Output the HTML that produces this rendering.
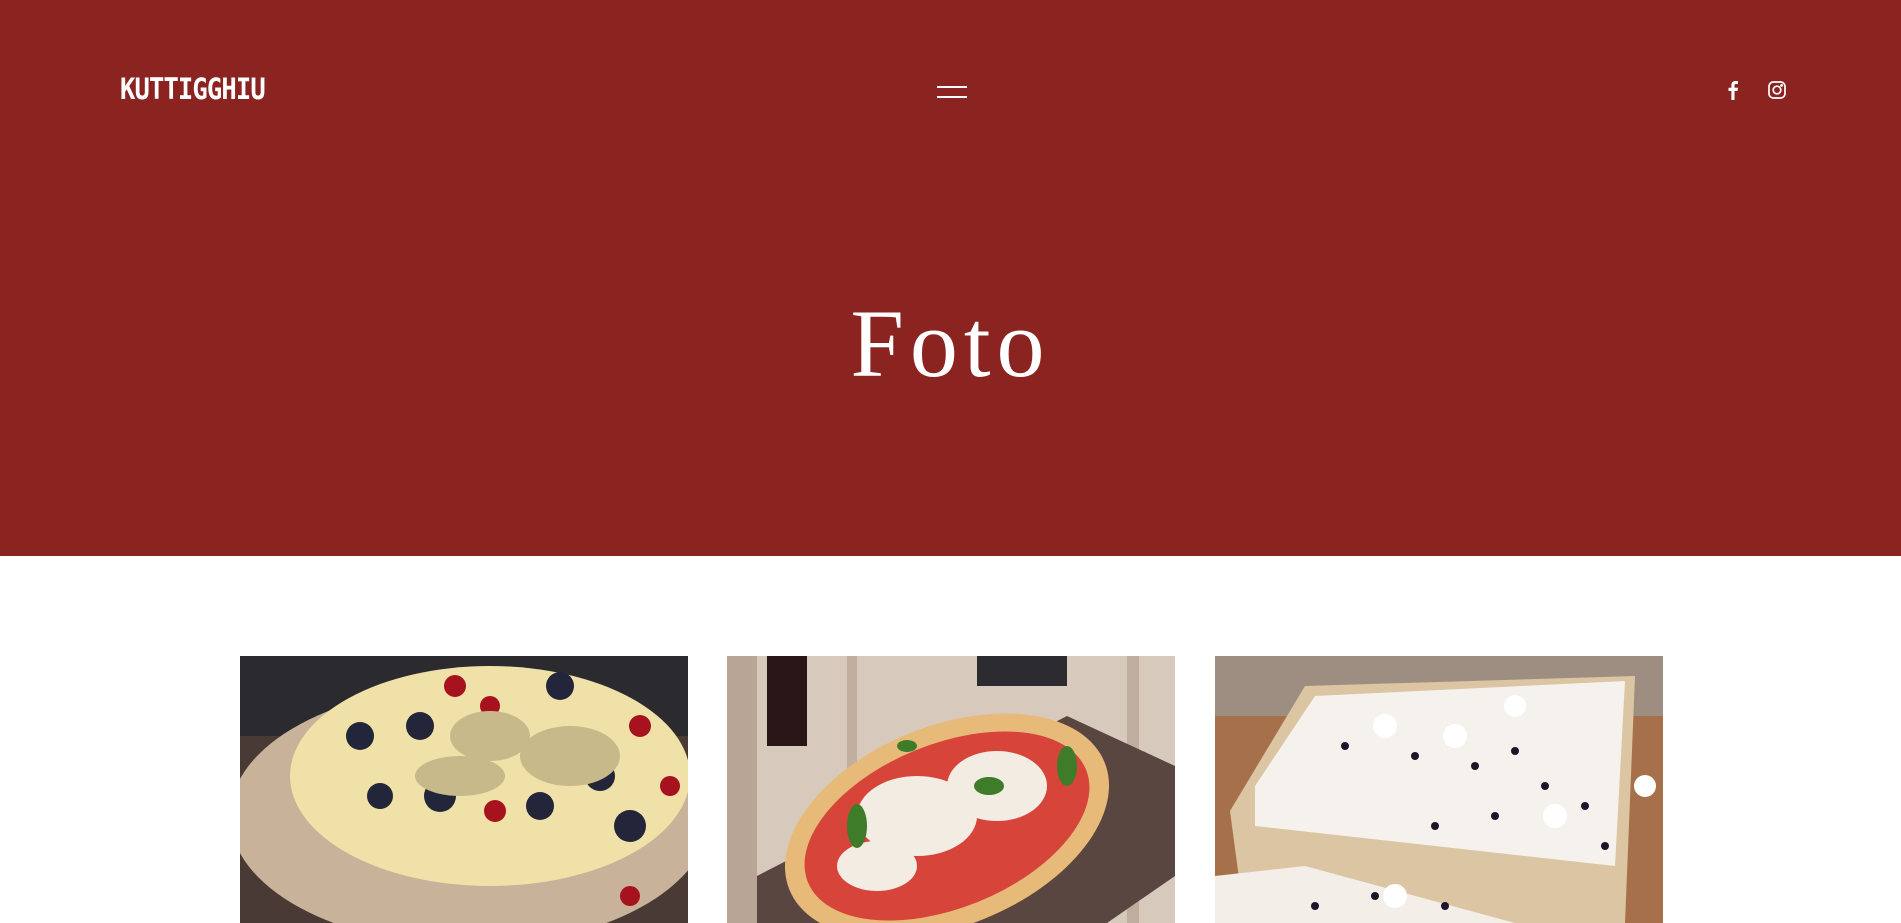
<!DOCTYPE html>
<html><head><meta charset="utf-8"><style>
*{margin:0;padding:0;box-sizing:border-box}
html,body{width:1901px;height:923px;overflow:hidden}
body{background:#fff;font-family:"Liberation Sans",sans-serif;position:relative}
.hero{position:absolute;left:0;top:0;width:1901px;height:556px;background:#8b2420}
.logo{position:absolute;left:120px;top:72px;color:#fff;font:bold 29px "DejaVu Sans Mono","Liberation Mono",monospace;letter-spacing:-1px;transform:scaleX(.88);transform-origin:left}
.ham{position:absolute;left:937px;width:30px;height:2px;background:#fff}
.title{position:absolute;left:0;width:1901px;top:288px;text-align:center;color:#fff;font:96px "Liberation Serif",serif;letter-spacing:6px}
.img{position:absolute;top:656px;height:267px;overflow:hidden}
</style></head><body>
<div class="hero">
<div class="logo">KUTTIGGHIU</div>
<div class="ham" style="top:86px"></div><div class="ham" style="top:96px"></div>
<svg style="position:absolute;left:1725px;top:80px" width="16" height="20" viewBox="0 0 16 20"><path d="M9.5 20V11h3l.5-3.3H9.5V5.6c0-1 .3-1.6 1.6-1.6H13V1.1C12.6 1 11.6 1 10.5 1 8 1 6.4 2.5 6.4 5.2v2.5H3.5V11h2.9v9z" fill="#fff"/></svg>
<svg style="position:absolute;left:1768px;top:81px" width="18" height="18" viewBox="0 0 18 18" fill="none" stroke="#fff" stroke-width="1.7"><rect x="1" y="1" width="16" height="16" rx="4.5"/><circle cx="9" cy="9" r="3.8"/><circle cx="13.6" cy="4.4" r=".6" fill="#fff"/></svg>
<div class="title">Foto</div>
</div>
<div class="img" style="left:240px;width:448px">
<svg width="448" height="267" viewBox="0 0 448 267"><rect width="448" height="267" fill="#4a3a36"/><rect width="448" height="80" fill="#2b2a2e"/><ellipse cx="230" cy="160" rx="240" ry="130" fill="#c9b29a"/><ellipse cx="250" cy="120" rx="200" ry="110" fill="#efe1a8"/><g fill="#23253a"><circle cx="120" cy="80" r="14"/><circle cx="180" cy="70" r="14"/><circle cx="200" cy="140" r="16"/><circle cx="320" cy="30" r="14"/><circle cx="360" cy="120" r="15"/><circle cx="390" cy="170" r="16"/><circle cx="140" cy="140" r="13"/><circle cx="300" cy="150" r="14"/></g><g fill="#a6121e"><circle cx="215" cy="30" r="11"/><circle cx="250" cy="50" r="10"/><circle cx="400" cy="70" r="11"/><circle cx="255" cy="155" r="11"/><circle cx="390" cy="240" r="10"/><circle cx="430" cy="130" r="10"/></g><g fill="#c8b98a"><ellipse cx="250" cy="80" rx="40" ry="25"/><ellipse cx="330" cy="100" rx="50" ry="30"/><ellipse cx="220" cy="120" rx="45" ry="20"/></g></svg></div>
<div class="img" style="left:727px;width:448px">
<svg width="448" height="267" viewBox="0 0 448 267"><rect width="448" height="267" fill="#d8c9bd"/><rect x="0" y="0" width="30" height="267" fill="#b8a595"/><rect x="120" y="0" width="10" height="267" fill="#c2ae9e"/><rect x="400" y="0" width="12" height="267" fill="#bfae9f"/><rect x="40" y="0" width="40" height="90" fill="#2a1616"/><rect x="250" y="0" width="90" height="30" fill="#2c2c30"/><path d="M30 267 L30 220 L340 60 L448 110 L448 220 L380 267z" fill="#5a4640"/><ellipse cx="220" cy="170" rx="170" ry="100" transform="rotate(-22 220 170)" fill="#e7ba7a"/><ellipse cx="220" cy="170" rx="150" ry="82" transform="rotate(-22 220 170)" fill="#d6443a"/><g fill="#f3ece3"><ellipse cx="190" cy="160" rx="60" ry="40"/><ellipse cx="270" cy="130" rx="50" ry="35"/><ellipse cx="150" cy="210" rx="40" ry="25"/></g><g fill="#3f7c2a"><ellipse cx="130" cy="170" rx="10" ry="22"/><ellipse cx="262" cy="130" rx="15" ry="9"/><ellipse cx="340" cy="110" rx="10" ry="20"/><ellipse cx="180" cy="90" rx="10" ry="6"/></g></svg></div>
<div class="img" style="left:1215px;width:448px">
<svg width="448" height="267" viewBox="0 0 448 267"><rect width="448" height="267" fill="#a6714a"/><rect width="448" height="60" fill="#9e8e82"/><path d="M15 155 L90 30 L420 20 L410 267 L30 267z" fill="#dcc5a3"/><path d="M40 130 L100 40 L410 25 L400 210 L40 170z" fill="#f5f1ec"/><path d="M0 220 L90 210 L300 267 L0 267z" fill="#f3eee8"/><g fill="#1b1628"><circle cx="130" cy="90" r="4"/><circle cx="200" cy="100" r="4"/><circle cx="260" cy="110" r="4"/><circle cx="300" cy="95" r="4"/><circle cx="330" cy="130" r="4"/><circle cx="370" cy="150" r="4"/><circle cx="220" cy="170" r="4"/><circle cx="280" cy="160" r="4"/><circle cx="390" cy="190" r="4"/><circle cx="100" cy="250" r="4"/><circle cx="160" cy="240" r="4"/><circle cx="230" cy="250" r="4"/></g><g fill="#fff"><circle cx="170" cy="70" r="12"/><circle cx="240" cy="80" r="12"/><circle cx="300" cy="50" r="11"/><circle cx="340" cy="160" r="12"/><circle cx="430" cy="130" r="11"/><circle cx="180" cy="240" r="12"/></g></svg></div>
</body></html>
